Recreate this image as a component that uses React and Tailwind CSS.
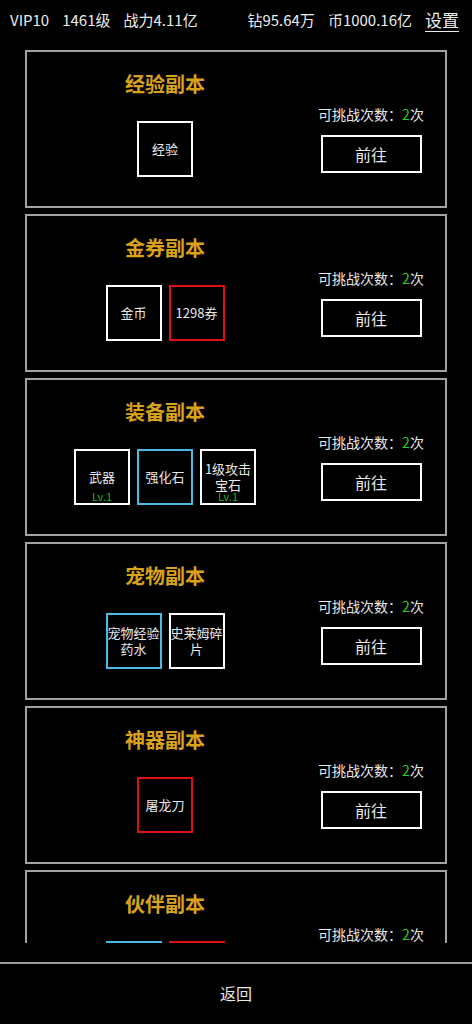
import React from 'react';

const dungeons = [
  { title: '经验副本', items: [{ name: '经验', color: 'white' }] },
  { title: '金券副本', items: [{ name: '金币', color: 'white' }, { name: '1298券', color: 'red' }] },
  {
    title: '装备副本',
    items: [
      { name: '武器', color: 'white', lv: 'Lv.1' },
      { name: '强化石', color: 'cyan' },
      { name: '1级攻击宝石', color: 'white', lv: 'Lv.1' },
    ],
  },
  { title: '宠物副本', items: [{ name: '宠物经验药水', color: 'cyan' }, { name: '史莱姆碎片', color: 'white' }] },
  { title: '神器副本', items: [{ name: '屠龙刀', color: 'red' }] },
  { title: '伙伴副本', items: [{ name: '', color: 'cyan' }, { name: '', color: 'red' }] },
];

const borderFor = {
  white: 'border-white',
  cyan: 'border-[#4ab9e3]',
  red: 'border-[#e01010]',
};

const Item = ({ item }) => (
  <div
    className={`relative w-[56px] h-[56px] border-2 ${borderFor[item.color]} flex flex-col items-center justify-center`}
  >
    <div className="text-[13px] leading-[16px] text-[#e8e8e8] text-center break-all">{item.name}</div>
    {item.lv && (
      <div className="absolute bottom-[1px] left-0 right-0 text-center text-[11px] leading-[11px] text-[#1fb51f]">
        {item.lv}
      </div>
    )}
  </div>
);

const Card = ({ d }) => (
  <div className="h-[158px] shrink-0 border-2 border-[#a3a3a3] flex">
    <div className="w-[276px] flex flex-col items-center pt-[20px]">
      <div className="h-[24px] text-[20px] leading-[24px] font-bold text-[#d9a21b]">{d.title}</div>
      <div className="mt-[25px] flex gap-[7px]">
        {d.items.map((it, i) => (
          <Item key={i} item={it} />
        ))}
      </div>
    </div>
    <div className="w-[136px] flex flex-col items-center pt-[54px]">
      <div className="text-[14px] leading-[16px] text-[#e8e8e8]">
        可挑战次数：<span className="text-[#22cc22]">2</span>次
      </div>
      <button className="mt-[13px] w-[101px] h-[38px] border-2 border-white text-[16px] text-[#e8e8e8]">
        前往
      </button>
    </div>
  </div>
);

const App = () => {
  return (
    <div
      className="w-[472px] h-[1024px] bg-black text-white flex flex-col overflow-hidden"
      style={{ fontFamily: '"Noto Sans CJK SC", "Noto Sans", sans-serif' }}
    >
      <div className="h-[40px] shrink-0 flex items-center justify-between pl-[10px] pr-[13px] text-[15px] text-[#ececec]">
        <div className="flex gap-[13px]">
          <span>VIP10</span>
          <span>1461级</span>
          <span>战力4.11亿</span>
        </div>
        <div className="flex items-center gap-[13px]">
          <span>钻95.64万</span>
          <span>币1000.16亿</span>
          <span className="text-[17px] underline underline-offset-4">设置</span>
        </div>
      </div>
      <div className="h-[903px] shrink-0 overflow-hidden pt-[10px] px-[25px] flex flex-col gap-[6px]">
        {dungeons.map((d, i) => (
          <Card key={i} d={d} />
        ))}
      </div>
      <div className="mt-[19px] flex-1 border-t-2 border-[#9a9a9a] flex items-center justify-center pb-[2px]">
        <span className="text-[16px] text-[#e8e8e8]">返回</span>
      </div>
    </div>
  );
};

export default App;
